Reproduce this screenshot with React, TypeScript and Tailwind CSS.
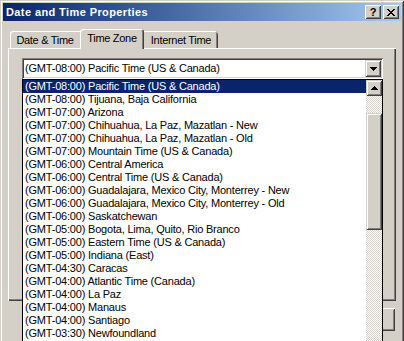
import React from "react";

const zones = [
  "(GMT-08:00) Pacific Time (US & Canada)",
  "(GMT-08:00) Tijuana, Baja California",
  "(GMT-07:00) Arizona",
  "(GMT-07:00) Chihuahua, La Paz, Mazatlan - New",
  "(GMT-07:00) Chihuahua, La Paz, Mazatlan - Old",
  "(GMT-07:00) Mountain Time (US & Canada)",
  "(GMT-06:00) Central America",
  "(GMT-06:00) Central Time (US & Canada)",
  "(GMT-06:00) Guadalajara, Mexico City, Monterrey - New",
  "(GMT-06:00) Guadalajara, Mexico City, Monterrey - Old",
  "(GMT-06:00) Saskatchewan",
  "(GMT-05:00) Bogota, Lima, Quito, Rio Branco",
  "(GMT-05:00) Eastern Time (US & Canada)",
  "(GMT-05:00) Indiana (East)",
  "(GMT-04:30) Caracas",
  "(GMT-04:00) Atlantic Time (Canada)",
  "(GMT-04:00) La Paz",
  "(GMT-04:00) Manaus",
  "(GMT-04:00) Santiago",
  "(GMT-03:30) Newfoundland",
];

const raisedWin =
  "shadow-[inset_1px_1px_#d4d0c8,inset_-1px_-1px_#404040,inset_2px_2px_#ffffff,inset_-2px_-2px_#808080]";
const raisedBtn =
  "shadow-[inset_1px_1px_#ffffff,inset_-1px_-1px_#404040,inset_2px_2px_#d4d0c8,inset_-2px_-2px_#808080]";

function ArrowDown() {
  return (
    <svg width="7" height="4" viewBox="0 0 7 4" shapeRendering="crispEdges">
      <path d="M0 0h7v1H0zM1 1h5v1H1zM2 2h3v1H2zM3 3h1v1H3z" fill="#000" />
    </svg>
  );
}

function ArrowUp() {
  return (
    <svg width="7" height="4" viewBox="0 0 7 4" shapeRendering="crispEdges">
      <path d="M3 0h1v1H3zM2 1h3v1H2zM1 2h5v1H1zM0 3h7v1H0z" fill="#000" />
    </svg>
  );
}

function CloseGlyph() {
  return (
    <svg width="8" height="7" viewBox="0 0 8 7" shapeRendering="crispEdges">
      <path
        d="M0 0h2v1H0zM6 0h2v1H6zM1 1h2v1H1zM5 1h2v1H5zM2 2h4v1H2zM3 3h2v1H3zM2 4h4v1H2zM1 5h2v1H1zM5 5h2v1H5zM0 6h2v1H0zM6 6h2v1H6z"
        fill="#000"
      />
    </svg>
  );
}

const checker =
  "bg-[image:repeating-conic-gradient(#ffffff_0_25%,#d4d0c8_0_50%)] bg-[length:2px_2px]";

export default function App() {
  return (
    <div className="w-[404px] h-[341px] overflow-hidden bg-[#d4d0c8] font-['Liberation_Sans',Arial,sans-serif] text-[11px] tracking-[-0.2px] text-black">
      <div
        className={`h-[400px] p-[3px] flex flex-col bg-[#d4d0c8] ${raisedWin}`}
      >
        {/* Title bar */}
        <div className="h-[18px] flex items-center justify-between pl-[3px] pr-[2px] bg-gradient-to-r from-[#0a246a] to-[#a6caf0]">
          <span className="text-white font-bold text-[11px] tracking-[0.4px] leading-none">
            Date and Time Properties
          </span>
          <div className="flex gap-[2px]">
            <div
              className={`w-[16px] h-[14px] bg-[#d4d0c8] flex items-center justify-center ${raisedBtn}`}
            >
              <span className="font-bold text-[11px] leading-none tracking-normal">
                ?
              </span>
            </div>
            <div
              className={`w-[16px] h-[14px] bg-[#d4d0c8] flex items-center justify-center ${raisedBtn}`}
            >
              <CloseGlyph />
            </div>
          </div>
        </div>

        {/* Body */}
        <div className="flex flex-col px-[5px] pt-[8px]">
          {/* Tabs */}
          <div className="flex items-end h-[19px] pl-[2px] tracking-[-0.3px]">
            <div className="w-[70px] h-[17px] flex items-center justify-center pt-[2px] rounded-tl-[3px] shadow-[inset_1px_1px_#ffffff]">
              Date &amp; Time
            </div>
            <div className="relative z-10 w-[64px] h-[20px] mb-[-1px] bg-[#d4d0c8] flex items-center justify-center pb-[1px] rounded-t-[3px] shadow-[inset_1px_1px_#ffffff,inset_-1px_0_#404040,inset_-2px_0_#808080]">
              Time Zone
            </div>
            <div className="w-[74px] h-[17px] flex items-center justify-center pt-[2px] rounded-tr-[3px] shadow-[inset_0_1px_#ffffff,inset_-1px_0_#404040,inset_-2px_0_#808080]">
              Internet Time
            </div>
          </div>

          {/* Panel */}
          <div className="h-[253px] pt-[10px] pl-[14px] shadow-[inset_1px_1px_#ffffff,inset_-1px_-1px_#404040,inset_-2px_-2px_#808080]">
            <div className="relative w-[361px]">
              {/* Combobox */}
              <div className="h-[21px] flex bg-white p-[2px] shadow-[inset_1px_1px_#808080,inset_-1px_-1px_#ffffff,inset_2px_2px_#404040,inset_-2px_-2px_#d4d0c8]">
                <div className="flex-1 flex items-center pl-[1px] whitespace-nowrap">
                  (GMT-08:00) Pacific Time (US &amp; Canada)
                </div>
                <div
                  className={`w-[16px] h-[17px] bg-[#d4d0c8] flex items-center justify-center ${raisedWin}`}
                >
                  <ArrowDown />
                </div>
              </div>

              {/* Dropdown list */}
              <div className="absolute left-0 top-[21px] z-20 w-[361px] h-[300px] border border-black bg-white flex">
                <div className="flex-1 flex flex-col">
                  {zones.map((z, i) => (
                    <div
                      key={z}
                      className={`h-[13px] leading-[13px] pl-[2px] whitespace-nowrap ${
                        i === 0 ? "bg-[#0a246a] text-white" : ""
                      }`}
                    >
                      {z}
                    </div>
                  ))}
                </div>
                <div className="w-[16px] flex flex-col">
                  <div
                    className={`h-[16px] bg-[#d4d0c8] flex items-center justify-center ${raisedWin}`}
                  >
                    <ArrowUp />
                  </div>
                  <div className={`h-[17px] ${checker}`} />
                  <div className={`h-[117px] bg-[#d4d0c8] ${raisedWin}`} />
                  <div className={`flex-1 ${checker}`} />
                  <div
                    className={`h-[16px] bg-[#d4d0c8] flex items-center justify-center ${raisedWin}`}
                  >
                    <ArrowDown />
                  </div>
                </div>
              </div>
            </div>
          </div>

          {/* Dialog buttons */}
          <div className="flex justify-end gap-[6px] mt-[7px] mr-[1px]">
            {["OK", "Cancel", "Apply"].map((b) => (
              <div
                key={b}
                className={`w-[75px] h-[23px] bg-[#d4d0c8] flex items-center justify-center ${raisedBtn}`}
              >
                {b}
              </div>
            ))}
          </div>
        </div>
      </div>
    </div>
  );
}
